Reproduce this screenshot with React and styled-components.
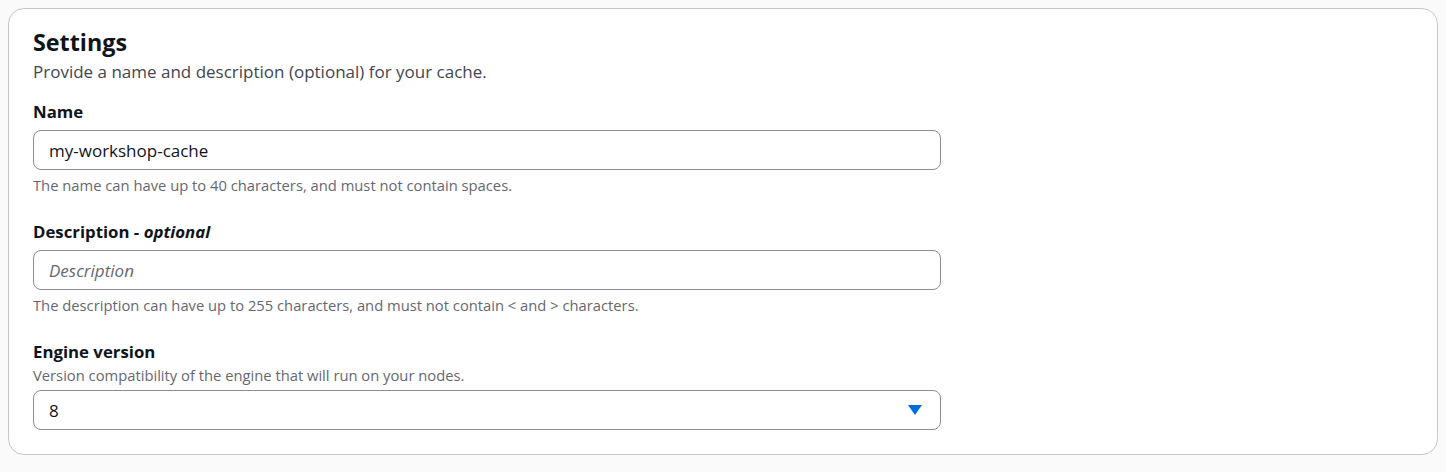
import styled, { createGlobalStyle } from "styled-components";

const GlobalStyle = createGlobalStyle`
  body {
    margin: 8px;
    background: #fafafa;
    font-family: "Open Sans", "Noto Sans", Arial, sans-serif;
    color: #0f141a;
  }
  * { box-sizing: border-box; }
`;

const Container = styled.section`
  background: #ffffff;
  border: 1px solid #c6c6cd;
  border-radius: 16px;
  padding: 21px 24px 24px;
  height: 447px;
`;

const Header = styled.header`
  margin-bottom: 19px;

  h2 {
    margin: 0;
    font-size: 23.3px;
    line-height: 24px;
    font-weight: 700;
    color: #0f141a;
  }

  p {
    margin: 8px 0 0;
    font-size: 17px;
    line-height: 20px;
    color: #424650;
  }
`;

const Fields = styled.div`
  display: flex;
  flex-direction: column;
  gap: 28px;
  width: 908px;
`;

const Field = styled.div`
  display: flex;
  flex-direction: column;
`;

const Label = styled.label`
  font-size: 16.8px;
  line-height: 22px;
  font-weight: 700;
  color: #0f141a;

  em {
    font-weight: 700;
    font-style: italic;
  }
`;

const Hint = styled.div`
  font-size: 14.75px;
  line-height: 16px;
  color: #656871;
  margin-top: ${props => props.$above ? "4px" : "7px"};
`;

const Control = styled.div`
  margin-top: 7px;
  height: 40px;
  border: 1px solid #8c8c94;
  border-radius: 8px;
  background: #ffffff;
  display: flex;
  align-items: center;
  padding: 0 15px;
  font-size: 17px;
  color: ${props => props.$placeholder ? "#656871" : "#0f141a"};
  font-style: ${props => props.$placeholder ? "italic" : "normal"};
`;

const Caret = styled.svg`
  margin-left: auto;
  width: 14px;
  height: 10px;
  margin-right: 3px;
`;

export default function App() {
  return (
    <>
      <GlobalStyle />
      <Container>
        <Header>
          <h2>Settings</h2>
          <p>Provide a name and description (optional) for your cache.</p>
        </Header>

        <Fields>
          <Field>
            <Label>Name</Label>
            <Control>my-workshop-cache</Control>
            <Hint>The name can have up to 40 characters, and must not contain spaces.</Hint>
          </Field>

          <Field>
            <Label>Description - <em>optional</em></Label>
            <Control $placeholder>Description</Control>
            <Hint>The description can have up to 255 characters, and must not contain &lt; and &gt; characters.</Hint>
          </Field>

          <Field>
            <Label>Engine version</Label>
            <Hint $above>Version compatibility of the engine that will run on your nodes.</Hint>
            <Control>
              8
              <Caret viewBox="0 0 14 10">
                <path d="M0 0h14L7 10z" fill="#006ce0" />
              </Caret>
            </Control>
          </Field>
        </Fields>
      </Container>
    </>
  );
}
